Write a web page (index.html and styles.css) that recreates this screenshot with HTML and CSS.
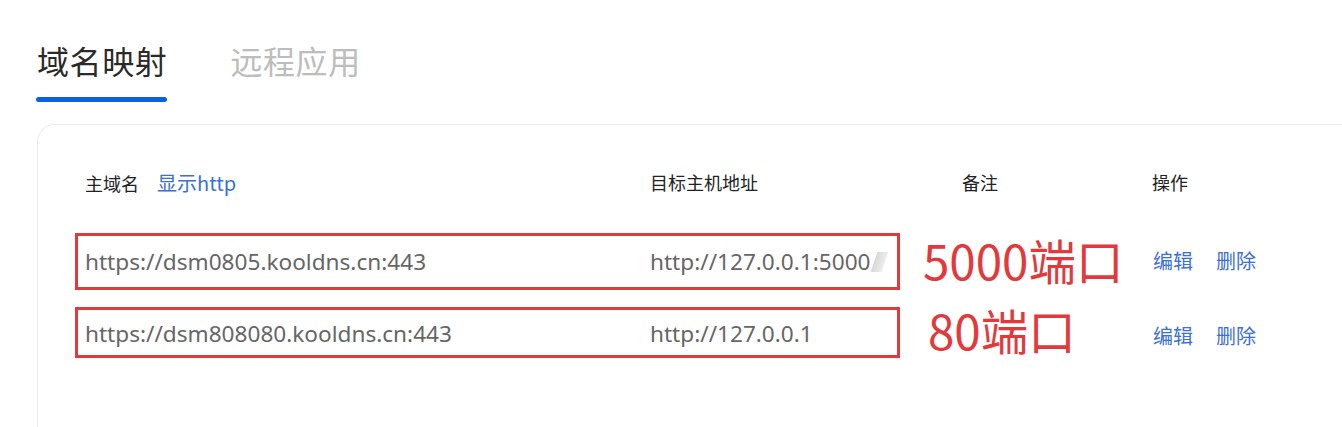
FILE: index.html
```html
<!DOCTYPE html>
<html lang="zh-CN">
<head>
<meta charset="utf-8">
<title>域名映射</title>
<link rel="stylesheet" href="styles.css">
</head>
<body>
  <div class="tabs">
    <div class="tab active">域名映射<span class="bar"></span></div>
    <div class="tab">远程应用</div>
  </div>
  <div class="card">
    <div class="head">
      <div class="h-main">主域名<span class="link show">显示http</span></div>
      <div class="h-target">目标主机地址</div>
      <div class="h-remark">备注</div>
      <div class="h-op">操作</div>
    </div>
    <div class="row row1">
      <div class="box">
        <div class="c-main">https://dsm0805.kooldns.cn:443</div>
        <div class="c-target">http://127.0.0.1:5000<span class="fade"></span></div>
      </div>
      <div class="remark">5000端口</div>
      <div class="ops"><span class="link">编辑</span><span class="link">删除</span></div>
    </div>
    <div class="row row2">
      <div class="box">
        <div class="c-main">https://dsm808080.kooldns.cn:443</div>
        <div class="c-target">http://127.0.0.1</div>
      </div>
      <div class="remark r80">80端口</div>
      <div class="ops"><span class="link">编辑</span><span class="link">删除</span></div>
    </div>
  </div>
</body>
</html>
```
FILE: styles.css
```css
html, body {
  margin: 0;
  padding: 0;
  background: #ffffff;
  overflow: hidden;
}
body {
  font-family: "Noto Sans CJK SC", "Noto Sans", sans-serif;
  color: #222;
  width: 1342px;
  height: 427px;
}
.tabs {
  display: flex;
  padding: 38px 0 0 37px;
  gap: 63px;
}
.tab {
  position: relative;
  font-size: 32px;
  line-height: 44px;
  color: #bdbdbd;
  letter-spacing: 0.6px;
}
.tab.active {
  color: #2a2a2a;
}
.bar {
  position: absolute;
  left: -1px;
  top: 59px;
  width: 131px;
  height: 5px;
  border-radius: 3px;
  background: #0b5fe3;
}
.card {
  margin: 42px 0 0 37px;
  border: 1px solid #ececec;
  border-right: none;
  border-bottom: none;
  border-top-left-radius: 18px;
  height: 320px;
  padding-top: 45px;
  box-sizing: border-box;
}
.head {
  display: flex;
  align-items: center;
  height: 24px;
  font-size: 18px;
  color: #222;
}
.h-main {
  padding-left: 47px;
  width: 612px;
  box-sizing: border-box;
}
.link {
  color: #3b70d6;
}
.show {
  margin-left: 18px;
  font-size: 20px;
}
.h-target {
  width: 312px;
}
.h-remark {
  width: 190px;
}
.row {
  display: flex;
  align-items: center;
}
.row1 {
  margin-top: 39px;
}
.row2 {
  margin-top: 17px;
}
.box {
  margin-left: 37px;
  width: 825px;
  border: 3px solid #e03a3e;
  box-sizing: border-box;
  display: flex;
  align-items: center;
  font-family: "Noto Sans", "Noto Sans CJK SC", sans-serif;
  font-size: 22.6px;
  color: #666;
  padding-left: 7px;
}
.row1 .box {
  height: 57px;
}
.row2 .box {
  height: 51px;
  padding-top: 2px;
}
.c-main {
  width: 565px;
}
.c-target {
  display: flex;
  align-items: center;
}
.fade {
  display: inline-block;
  width: 11px;
  height: 20px;
  margin-left: 3px;
  background: linear-gradient(90deg, #d8d8d8, #eeeeee);
  transform: skewX(-18deg);
}
.remark {
  margin-left: 23px;
  width: 230px;
  font-size: 47.5px;
  line-height: 56px;
  color: #e23a3c;
}
.row1 .remark {
  margin-top: -4px;
}
.r80 {
  margin-left: 28px;
  width: 225px;
  margin-top: -6px;
}
.ops {
  display: flex;
  gap: 23px;
  font-size: 20px;
}
.row1 .ops {
  margin-top: -3px;
}
.row2 .ops {
  margin-top: 6px;
}
```
